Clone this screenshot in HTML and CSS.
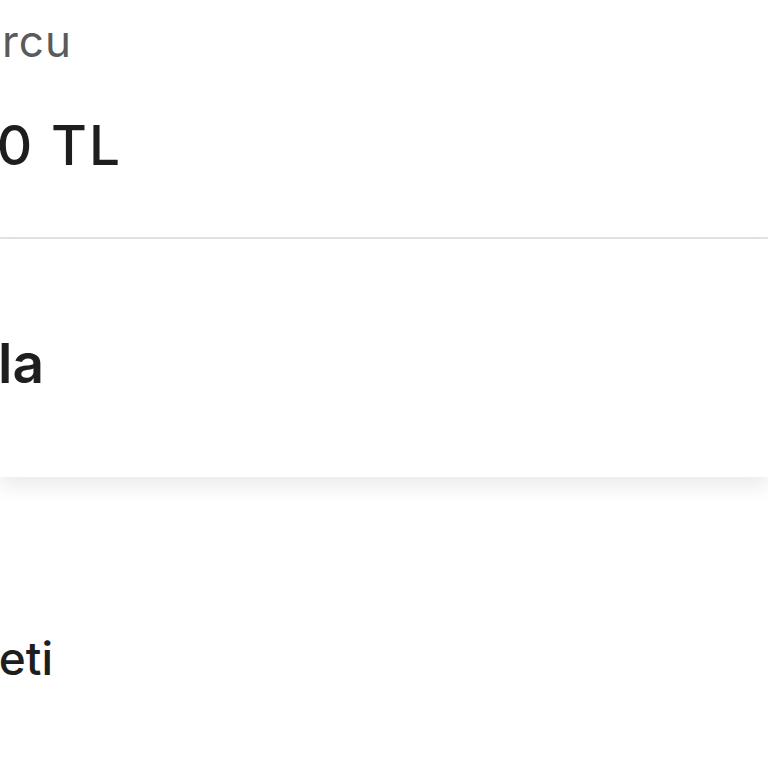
FILE: index.html
```html
<!DOCTYPE html>
<html lang="tr">
<head>
    <meta charset="UTF-8">
    <meta name="viewport" content="width=device-width, initial-scale=1.0">
    <title>Sepet Özeti</title>
    <link rel="stylesheet" href="styles.css">
</head>
<body>
    <div class="summary">
        <div class="cut cut-label"><span class="label">Toplam Borcu</span></div>
        <div class="cut cut-value"><span class="value">1.250 TL</span></div>
    </div>

    <div class="card">
        <div class="cut cut-action"><span class="action">Tamamla</span></div>
    </div>

    <div class="details">
        <div class="cut cut-row"><span class="row-title">Kargo Ücreti</span></div>
    </div>
</body>
</html>
```

FILE: styles.css
```css
body {
    margin: 0;
    background: #fff;
    font-family: Inter, 'Noto Sans', sans-serif;
    color: #1e1e1e;
    overflow: hidden;
}

/* text starts off screen, only the tail is visible */
.cut {
    display: flex;
    justify-content: flex-end;
    white-space: nowrap;
}

.cut span {
    flex-shrink: 0;
}

.summary {
    padding: 16px 0 59px;
    border-bottom: 2px solid #e3e3e3;
}

.cut-label { width: 72px; }
.cut-value { width: 122px; margin-top: 46px; }

.label {
    font-size: 44px;
    line-height: 50px;
    letter-spacing: 1px;
    color: #5a5a5a;
    font-weight: 400;
}

.value {
    font-size: 55px;
    line-height: 66px;
    letter-spacing: 2px;
    font-weight: 500;
    color: #1e1e1e;
}

.card {
    background: #fff;
    padding: 91px 0 81px;
    box-shadow: 0 10px 18px rgba(0, 0, 0, 0.08);
}

.cut-action { width: 44px; }

.action {
    font-size: 55px;
    line-height: 66px;
    font-weight: 600;
}

.details {
    padding-top: 153px;
}

.cut-row { width: 53px; }

.row-title {
    font-size: 46px;
    line-height: 56px;
    font-weight: 500;
}
```
